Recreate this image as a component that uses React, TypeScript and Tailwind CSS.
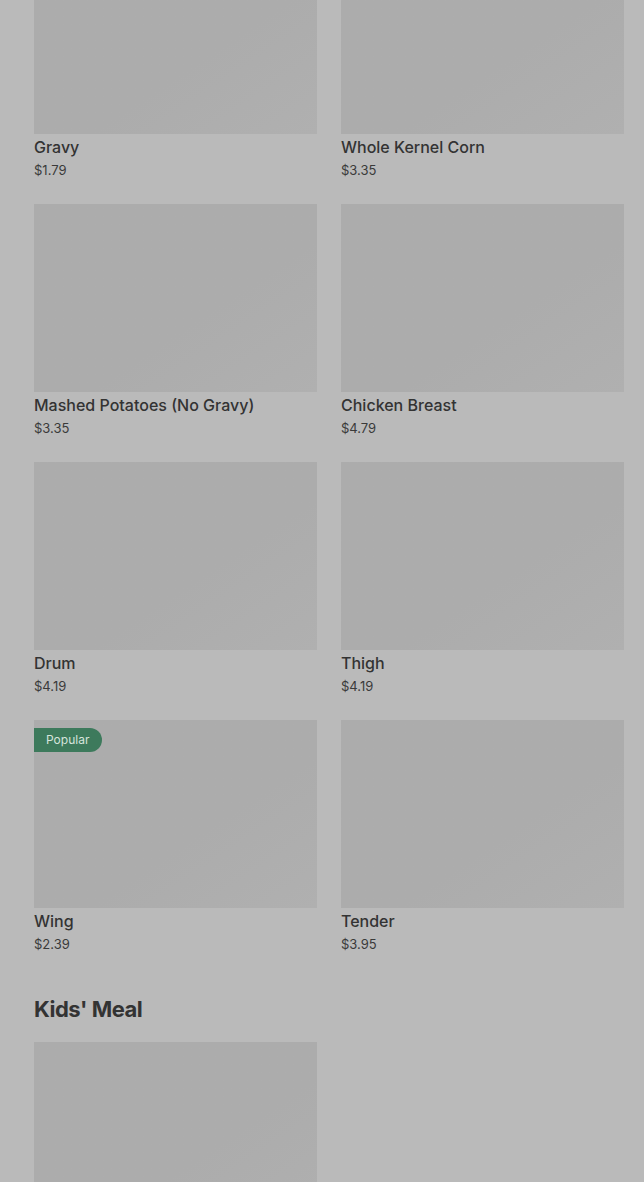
import React from "react";

type Item = { name: string; price: string; popular?: boolean };

const items: Item[] = [
  { name: "Gravy", price: "$1.79" },
  { name: "Whole Kernel Corn", price: "$3.35" },
  { name: "Mashed Potatoes (No Gravy)", price: "$3.35" },
  { name: "Chicken Breast", price: "$4.79" },
  { name: "Drum", price: "$4.19" },
  { name: "Thigh", price: "$4.19" },
  { name: "Wing", price: "$2.39", popular: true },
  { name: "Tender", price: "$3.95" },
];

function Card({ item }: { item?: Item }) {
  return (
    <div className="flex flex-col">
      <div className="relative h-[188px] bg-gradient-to-br from-[#acacac] from-60% to-[#b0b0b0]">
        {item?.popular && (
          <span className="absolute left-0 top-[8px] flex h-[24px] items-center rounded-r-full bg-[#3d7a5c] pl-[12px] pr-[13px] text-[12px] text-[#d6e4dc]">
            Popular
          </span>
        )}
      </div>
      {item && (
        <>
          <div className="mt-[1px] text-[16px] leading-[24px] font-medium text-[#333333]">{item.name}</div>
          <div className="mt-[1px] text-[13px] leading-[20px] text-[#3a3a3a]">{item.price}</div>
        </>
      )}
    </div>
  );
}

export default function App() {
  return (
    <div
      className="min-h-[1182px] overflow-hidden bg-[#bababa] pl-[34px] pr-[20px]"
      style={{ fontFamily: "Inter, 'Noto Sans', sans-serif" }}
    >
      <div className="-mt-[54px] grid grid-cols-2 gap-x-[24px] gap-y-[24px]">
        {items.map((it) => (
          <Card key={it.name} item={it} />
        ))}
      </div>
      <h2 className="mt-[41px] mb-[19px] text-[22px] leading-[28px] font-bold tracking-[-0.5px] text-[#333333]">
        Kids' Meal
      </h2>
      <div className="grid grid-cols-2 gap-x-[24px]">
        <Card />
      </div>
    </div>
  );
}
